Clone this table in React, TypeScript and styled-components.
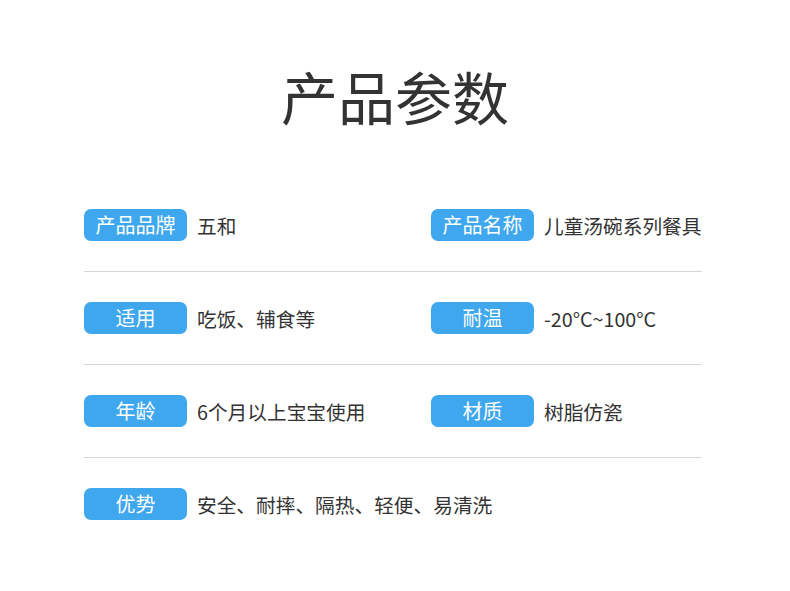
import styled, { createGlobalStyle } from "styled-components";

type Item = { label: string; value: string };

const rows: Item[][] = [
  [
    { label: "产品品牌", value: "五和" },
    { label: "产品名称", value: "儿童汤碗系列餐具" },
  ],
  [
    { label: "适用", value: "吃饭、辅食等" },
    { label: "耐温", value: "-20°C~100°C" },
  ],
  [
    { label: "年龄", value: "6个月以上宝宝使用" },
    { label: "材质", value: "树脂仿瓷" },
  ],
  [{ label: "优势", value: "安全、耐摔、隔热、轻便、易清洗" }],
];

const Global = createGlobalStyle`
  body {
    margin: 0;
    background: #fff;
    font-family: "Noto Sans CJK SC", "Noto Sans", sans-serif;
  }
`;

const Page = styled.div`
  width: 790px;
  height: 591px;
  overflow: hidden;
`;

const Title = styled.h1`
  margin: 0;
  height: 179px;
  padding-top: 58px;
  box-sizing: border-box;
  text-align: center;
  font-size: 57px;
  line-height: 74px;
  font-weight: 400;
  color: #333;
`;

const Table = styled.div`
  margin-left: 84px;
  width: 618px;
`;

const Row = styled.div<{ $last?: boolean }>`
  display: grid;
  grid-template-columns: 347px 1fr;
  align-items: center;
  height: 92px;
  border-bottom: ${(p) => (p.$last ? "none" : "1px solid #d6d6d6")};
`;

const Cell = styled.div`
  display: flex;
  align-items: center;
  gap: 10px;
`;

const Badge = styled.span`
  width: 103px;
  height: 32px;
  border-radius: 7px;
  background: #3ea7ee;
  color: #fff;
  font-size: 20px;
  line-height: 32px;
  text-align: center;
  flex-shrink: 0;
`;

const Value = styled.span`
  font-size: 19.7px;
  color: #333;
  white-space: nowrap;
`;

export default function App() {
  return (
    <Page>
      <Global />
      <Title>产品参数</Title>
      <Table>
        {rows.map((r, i) => (
          <Row key={i} $last={i === rows.length - 1}>
            {r.map((it) => (
              <Cell key={it.label}>
                <Badge>{it.label}</Badge>
                <Value>{it.value}</Value>
              </Cell>
            ))}
          </Row>
        ))}
      </Table>
    </Page>
  );
}
